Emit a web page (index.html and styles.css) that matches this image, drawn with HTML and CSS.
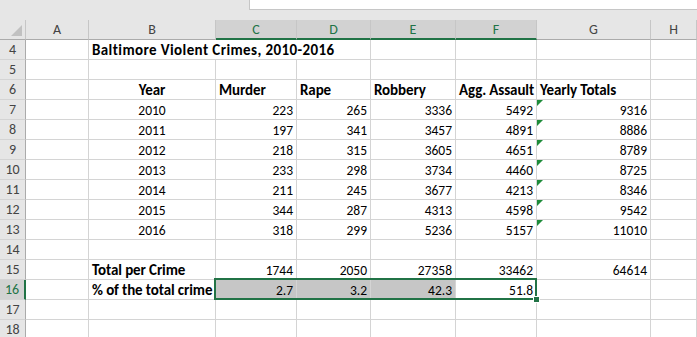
FILE: index.html
```html
<!DOCTYPE html>
<html lang="en">
<head>
    <meta charset="UTF-8">
    <title>Baltimore Violent Crimes</title>
    <link rel="stylesheet" href="styles.css">
</head>
<body>
    <div class="topbar">
        <div class="formula-box"></div>
    </div>

    <div class="sheet">
        <div class="corner"><span class="corner-tri"></span></div>
        <div class="ch">A</div>
        <div class="ch">B</div>
        <div class="ch on">C</div>
        <div class="ch on">D</div>
        <div class="ch on">E</div>
        <div class="ch on">F</div>
        <div class="ch">G</div>
        <div class="ch">H</div>

        <div class="rh">4</div>
        <div class="c"></div>
        <div class="c b wide">Baltimore Violent Crimes, 2010-2016</div>
        <div class="c"></div>
        <div class="c"></div>
        <div class="c"></div>
        <div class="c"></div>

        <div class="rh">5</div>
        <div class="c"></div><div class="c"></div><div class="c"></div><div class="c"></div>
        <div class="c"></div><div class="c"></div><div class="c"></div><div class="c"></div>

        <div class="rh">6</div>
        <div class="c"></div>
        <div class="c b mid">Year</div>
        <div class="c b">Murder</div>
        <div class="c b">Rape</div>
        <div class="c b">Robbery</div>
        <div class="c b">Agg. Assault</div>
        <div class="c b">Yearly Totals</div>
        <div class="c"></div>

        <div class="rh">7</div>
        <div class="c"></div>
        <div class="c mid num-txt">2010</div>
        <div class="c num">223</div>
        <div class="c num">265</div>
        <div class="c num">3336</div>
        <div class="c num">5492</div>
        <div class="c num err">9316</div>
        <div class="c"></div>

        <div class="rh">8</div>
        <div class="c"></div>
        <div class="c mid num-txt">2011</div>
        <div class="c num">197</div>
        <div class="c num">341</div>
        <div class="c num">3457</div>
        <div class="c num">4891</div>
        <div class="c num err">8886</div>
        <div class="c"></div>

        <div class="rh">9</div>
        <div class="c"></div>
        <div class="c mid num-txt">2012</div>
        <div class="c num">218</div>
        <div class="c num">315</div>
        <div class="c num">3605</div>
        <div class="c num">4651</div>
        <div class="c num err">8789</div>
        <div class="c"></div>

        <div class="rh">10</div>
        <div class="c"></div>
        <div class="c mid num-txt">2013</div>
        <div class="c num">233</div>
        <div class="c num">298</div>
        <div class="c num">3734</div>
        <div class="c num">4460</div>
        <div class="c num err">8725</div>
        <div class="c"></div>

        <div class="rh">11</div>
        <div class="c"></div>
        <div class="c mid num-txt">2014</div>
        <div class="c num">211</div>
        <div class="c num">245</div>
        <div class="c num">3677</div>
        <div class="c num">4213</div>
        <div class="c num err">8346</div>
        <div class="c"></div>

        <div class="rh">12</div>
        <div class="c"></div>
        <div class="c mid num-txt">2015</div>
        <div class="c num">344</div>
        <div class="c num">287</div>
        <div class="c num">4313</div>
        <div class="c num">4598</div>
        <div class="c num err">9542</div>
        <div class="c"></div>

        <div class="rh">13</div>
        <div class="c"></div>
        <div class="c mid num-txt">2016</div>
        <div class="c num">318</div>
        <div class="c num">299</div>
        <div class="c num">5236</div>
        <div class="c num">5157</div>
        <div class="c num err">11010</div>
        <div class="c"></div>

        <div class="rh">14</div>
        <div class="c"></div><div class="c"></div><div class="c"></div><div class="c"></div>
        <div class="c"></div><div class="c"></div><div class="c"></div><div class="c"></div>

        <div class="rh">15</div>
        <div class="c"></div>
        <div class="c b">Total per Crime</div>
        <div class="c num">1744</div>
        <div class="c num">2050</div>
        <div class="c num">27358</div>
        <div class="c num">33462</div>
        <div class="c num">64614</div>
        <div class="c"></div>

        <div class="rh on">16</div>
        <div class="c"></div>
        <div class="c b">% of the total crime</div>
        <div class="c num sel">2.7</div>
        <div class="c num sel">3.2</div>
        <div class="c num sel">42.3</div>
        <div class="c num">51.8</div>
        <div class="c"></div>
        <div class="c"></div>

        <div class="rh">17</div>
        <div class="c"></div><div class="c"></div><div class="c"></div><div class="c"></div>
        <div class="c"></div><div class="c"></div><div class="c"></div><div class="c"></div>

        <div class="rh">18</div>
        <div class="c"></div><div class="c"></div><div class="c"></div><div class="c"></div>
        <div class="c"></div><div class="c"></div><div class="c"></div><div class="c"></div>

        <!-- selected range C16:F16 -->
        <div class="selection"><span class="fill-handle"></span></div>
    </div>
</body>
</html>
```

FILE: styles.css
```css
body {
    margin: 0;
    background-color: #ffffff;
    font-family: Carlito, Lato, "Liberation Sans", sans-serif;
    font-size: 15px;
    color: #000000;
    overflow: hidden;
}
.topbar {
    height: 20px;
    background-color: #e6e6e6;
    display: flex;
    justify-content: flex-end;
}
.formula-box {
    width: 447px;
    height: 9px;
    background-color: #ffffff;
    border-left: 1px solid #c6c6c6;
    border-bottom: 1px solid #c6c6c6;
}
.sheet {
    display: grid;
    grid-template-columns: 26px 63px 127px 81px 74px 85px 81px 114px 1fr;
    grid-auto-rows: 20px;
    position: relative;
}
.sheet > div {
    box-sizing: border-box;
}
.corner {
    background-color: #e6e6e6;
    border-right: 1px solid #c6c6c6;
    border-bottom: 1px solid #ababab;
    position: relative;
}
.corner-tri {
    position: absolute;
    right: 3px;
    bottom: 3px;
    width: 0;
    height: 0;
    border-left: 11px solid transparent;
    border-bottom: 11px solid #c1c1c1;
}
.ch {
    background-color: #e6e6e6;
    color: #444444;
    font-size: 14px;
    text-align: center;
    line-height: 20px;
    border-right: 1px solid #c6c6c6;
    border-bottom: 1px solid #ababab;
}
.ch.on {
    background-color: #d2d2d2;
    color: #217346;
    border-bottom: 2px solid #217346;
}
.rh {
    background-color: #e6e6e6;
    color: #444444;
    font-size: 14px;
    text-align: center;
    line-height: 20px;
    border-right: 1px solid #ababab;
    border-bottom: 1px solid #d4d4d4;
}
.rh.on {
    background-color: #d2d2d2;
    color: #217346;
    border-right: 2px solid #217346;
}
.c {
    position: relative;
    padding: 0 3px;
    line-height: 21px;
    white-space: nowrap;
    border-right: 1px solid #d4d4d4;
    border-bottom: 1px solid #d4d4d4;
}
.b {
    font-weight: bold;
    letter-spacing: -0.1px;
}
.wide {
    grid-column: span 3;
    letter-spacing: 0.4px;
}
.mid {
    text-align: center;
}
.num {
    text-align: right;
    font-size: 13.5px;
}
.num-txt {
    font-size: 13.5px;
}
.sel {
    background-color: #c6c6c6;
}
.err::before {
    content: '';
    position: absolute;
    top: 0;
    left: 0;
    border-top: 6px solid #1e8c3a;
    border-right: 6px solid transparent;
}
.selection {
    position: absolute;
    left: 214px;
    top: 258px;
    width: 323px;
    height: 22px;
    border: 2px solid #217346;
    box-sizing: border-box;
}
.fill-handle {
    position: absolute;
    right: -5px;
    bottom: -5px;
    width: 5px;
    height: 5px;
    background-color: #217346;
    border: 1px solid #ffffff;
}
```
